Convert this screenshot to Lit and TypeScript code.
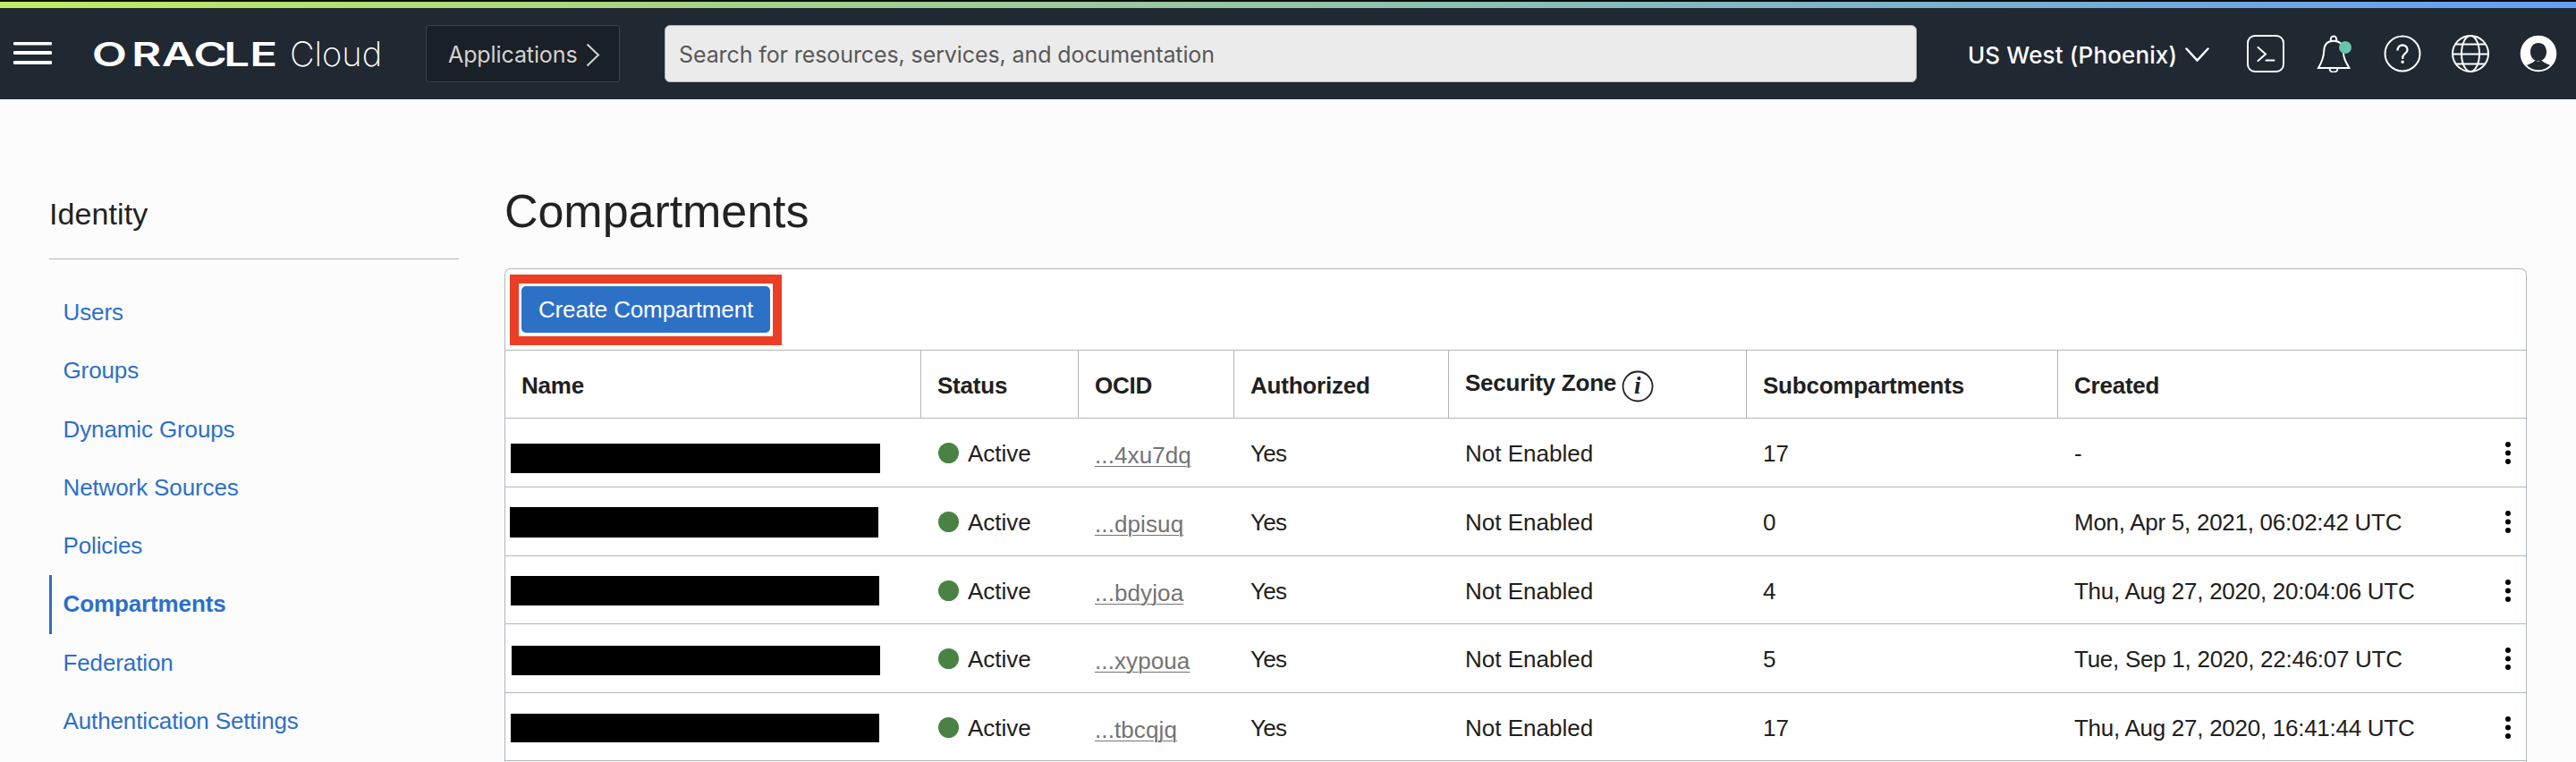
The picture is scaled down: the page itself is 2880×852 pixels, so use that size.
import { LitElement, html, css } from "lit";
import { customElement } from "lit/decorators.js";
import { classMap } from "lit/directives/class-map.js";

interface Compartment {
  ocid: string;
  subs: string;
  created: string;
  height: number;
  mask: { left: number; top: number; width: number; height: number };
}

const LINKS = [
  "Users", "Groups", "Dynamic Groups", "Network Sources",
  "Policies", "Compartments", "Federation", "Authentication Settings",
];

const ROWS: Compartment[] = [
  { ocid: "...4xu7dq", subs: "17", created: "-", height: 77, mask: { left: 6, top: 28, width: 413, height: 33 } },
  { ocid: "...dpisuq", subs: "0", created: "Mon, Apr 5, 2021, 06:02:42 UTC", height: 77, mask: { left: 5, top: 22, width: 412, height: 33.5 } },
  { ocid: "...bdyjoa", subs: "4", created: "Thu, Aug 27, 2020, 20:04:06 UTC", height: 76, mask: { left: 6, top: 22, width: 412, height: 33 } },
  { ocid: "...xypoua", subs: "5", created: "Tue, Sep 1, 2020, 22:46:07 UTC", height: 77, mask: { left: 6.5, top: 23.5, width: 412, height: 33 } },
  { ocid: "...tbcqjq", subs: "17", created: "Thu, Aug 27, 2020, 16:41:44 UTC", height: 76, mask: { left: 6, top: 22.5, width: 411.5, height: 32 } },
];

@customElement("cloud-header")
class CloudHeader extends LitElement {
  static styles = css`
    :host { display: block; font-family: Inter, sans-serif; }
    .stripe { height: 7px; border-top: 2px solid #0d0d0d; background: linear-gradient(90deg, #c1eb62, #a5d584 26%, #93c5a8 50%, #7bb2cd 74%, #639ff8); }
    .bar { height: 102px; background: #202832; display: flex; align-items: center; color: #fff; box-sizing: border-box; padding: 0 21px 0 15px; }
    svg { display: block; fill: none; stroke: #fff; stroke-width: 2; flex: none; }
    .burger { margin-right: 44px; stroke: none; fill: #fff; }
    .logo { margin-right: 44px; stroke: none; fill: #fff; overflow: visible; }
    .brand { font: 600 37px Inter, sans-serif; }
    .cloud { font: 200 38px Inter, sans-serif; }
    .apps { width: 217px; height: 64px; box-sizing: border-box; border: 1px solid #39424e; border-radius: 3px; background: #1a2027; color: #d4d2cf; font-size: 25px; letter-spacing: -0.1px; display: flex; align-items: center; padding: 2px 0 0 24px; gap: 9px; margin-right: 50px; flex: none; }
    .apps svg { stroke: #d4d2cf; }
    .search { width: 1400px; height: 64px; box-sizing: border-box; border: 1px solid #adb5be; border-radius: 6px; background: #ebebeb; color: #585858; font-size: 25px; letter-spacing: -0.1px; display: flex; align-items: center; padding: 2px 0 0 15px; flex: none; }
    .region { margin-left: 57px; font-size: 26px; font-weight: 500; padding-top: 2px; width: 233px; letter-spacing: 0.12px; white-space: nowrap; flex: none; }
    .down { margin: 2px 0 0 10px; }
    .icons { display: flex; justify-content: space-between; width: 347px; margin-left: auto; align-items: center; flex: none; }
  `;
  render() {
    return html`
      <div class="stripe"></div>
      <div class="bar">
        <svg class="burger" width="43" height="26" viewBox="0 0 43 26">
          <rect width="43" height="3.4" rx="1" /><rect y="10" width="43" height="4" rx="1" /><rect y="21" width="43" height="4" rx="1" />
        </svg>
        <svg class="logo" width="330" height="32" viewBox="0 0 330 32">
          <text class="brand" transform="scale(1.38 1)" x="0.6 32.6 57 82.8 107.5 128.5" y="30">ORACLE</text>
          <text class="cloud" x="222" y="30">Cloud</text>
        </svg>
        <div class="apps">Applications
          <svg width="16" height="27" viewBox="0 0 16 27"><path d="M1.5 1.5L14 13.500 1.5 25.5" /></svg>
        </div>
        <div class="search">Search for resources, services, and documentation</div>
        <div class="region">US West (Phoenix)</div>
        <svg class="down" width="27" height="16" viewBox="0 0 27 16"><path stroke-width="2.5" stroke-linecap="round" d="M1.5 1.5L13.5 14.5 25.5 1.5" /></svg>
        <div class="icons">
          <svg width="42" height="42" viewBox="0 0 42 42"><rect x="1" y="1" width="40" height="40" rx="8" /><path stroke-linecap="round" d="M12.5 14l8.5 7.5-8.5 7.5M21.5 28.5h9" /></svg>
          <svg width="42" height="42" viewBox="0 0 42 42"><path d="M17.800 7V4.700a3.200 3.200 0 0 1 6.400 0V7M4 37H38.400C34 29 32 26 31.800 18 31.500 10 27 6.700 21 6.700S10.500 10 10.200 18C10 26 7.500 31 4 37ZM16.500 37.500a4.500 4.200 0 0 0 9 0" /><circle cx="34" cy="14" r="7" fill="#66c5ab" stroke="none" /></svg>
          <svg width="42" height="42" viewBox="0 0 42 42"><circle cx="21" cy="21" r="19.500" /><path stroke-width="2.300" d="M15.500 17.500c0-4 2.500-6 5.500-6s5.500 2 5.500 5.200c0 4.300-5.300 4.300-5.300 8.800v1.500" /><circle cx="21.100" cy="30.300" r="1.700" fill="#fff" stroke="none" /></svg>
          <svg width="42" height="42" viewBox="0 0 42 42"><circle cx="21" cy="21" r="20" /><ellipse cx="21" cy="21" rx="10" ry="20" /><path d="M1 21.500h40M5 10.500h32M5 32.500h32" /></svg>
          <svg width="42" height="42" viewBox="0 0 42 42"><circle cx="21" cy="21" r="19.300" /><path fill="#fff" stroke="none" fill-rule="evenodd" d="M21 1a20 20 0 0 1 14.500 33.500C31 32.500 28 31.500 25 29H17C14 31.500 11 32.500 6.500 34.500A20 20 0 0 1 21 1ZM21 9C15.500 9 12 13 12 19s4 10.500 9 10.500 9-4.500 9-10.500S26.500 9 21 9Z" /></svg>
        </div>
      </div>`;
  }
}

@customElement("identity-nav")
class IdentityNav extends LitElement {
  static styles = css`
    :host { display: block; width: 458px; flex: none; }
    .title { font-size: 34px; line-height: 40px; letter-spacing: 0.1px; color: #222; padding: 108px 0 30px; height: 40px; border-bottom: 1px solid #b0b7be; }
    .links { padding-top: 27px; }
    .link { height: 65.3px; box-sizing: border-box; border-left: 3px solid transparent; padding-left: 12.5px; font-size: 26px; line-height: 64px; letter-spacing: -0.12px; color: #2b70c8; }
    .active { border-left-color: #2b70c8; font-weight: bold; }
  `;
  render() {
    return html`
      <div class="title">Identity</div>
      <div class="links">
        ${LINKS.map((l) => html`<div class=${classMap({ link: true, active: l === "Compartments" })}>${l}</div>`)}
      </div>`;
  }
}

@customElement("compartment-table")
class CompartmentTable extends LitElement {
  static styles = css`
    :host { display: block; width: 2261px; box-sizing: border-box; border: 1px solid #b1b6be; border-bottom: none; border-radius: 7px 7px 0 0; background: #fff; height: 552px; color: #202020; font-size: 26px; line-height: 30px; overflow: hidden; white-space: nowrap; }
    .toolbar { height: 91px; box-sizing: border-box; padding: 6px 0 0 5px; border-bottom: 1px solid #b1b6be; }
    .mark { width: 304px; height: 79px; box-sizing: border-box; border: 10px solid #eb3e25; padding: 3px; }
    .create { width: 278px; height: 52px; border-radius: 5px; background: #2d71c7; color: #fff; text-align: center; line-height: 52px; letter-spacing: -0.15px; }
    .row { display: grid; grid-template-columns: 465px 176px 174px 240px 333px 348px 1fr; box-sizing: border-box; border-bottom: 1px solid #b1b6be; }
    .head { height: 76px; font-weight: bold; letter-spacing: -0.22px; }
    .h { border-right: 1px solid #b1b6be; padding: 24px 0 0 18px; }
    .h:last-child { border-right: none; }
    .zone { display: flex; gap: 6px; padding-top: 21px; }
    .info { margin-top: 1px; display: block; }
    .i { font: italic bold 27px "Liberation Serif", serif; }
    .cell { padding: 24px 0 0 18px; }
    .status { display: flex; gap: 10px; padding-left: 19px; }
    .dot { width: 23px; height: 23px; border-radius: 50%; background: #4a8243; margin-top: 3px; }
    .mask { background: #000; }
    .ocid { padding-top: 26px; letter-spacing: 0.1px; color: #737373; }
    .under { text-decoration: underline; text-decoration-thickness: 1px; text-underline-offset: 3px; }
    .yes { letter-spacing: -0.7px; }
    .created { display: flex; justify-content: space-between; letter-spacing: -0.27px; padding-right: 16px; }
    .menu { margin-top: 1px; }
  `;
  render() {
    return html`
      <div class="toolbar"><div class="mark"><div class="create">Create Compartment</div></div></div>
      <div class="row head">
        <div class="h">Name</div><div class="h">Status</div><div class="h">OCID</div><div class="h">Authorized</div>
        <div class="h zone">Security Zone
          <svg class="info" width="36" height="36" viewBox="0 0 36 36"><circle cx="18" cy="18" r="16.500" fill="none" stroke="#202020" stroke-width="1.800" /><text class="i" x="14" y="26" fill="#202020">i</text></svg>
        </div>
        <div class="h">Subcompartments</div><div class="h">Created</div>
      </div>
      ${ROWS.map((r) => html`
        <div class="row" style="height:${r.height}px">
          <div class="mask" style="width:${r.mask.width}px;height:${r.mask.height}px;margin:${r.mask.top}px 0 0 ${r.mask.left}px"></div>
          <div class="cell status"><span class="dot"></span>Active</div>
          <div class="cell ocid"><span class="under">${r.ocid}</span></div>
          <div class="cell yes">Yes</div>
          <div class="cell">Not Enabled</div>
          <div class="cell">${r.subs}</div>
          <div class="cell created"><span>${r.created}</span>
            <svg class="menu" width="8" height="28" viewBox="0 0 8 28"><circle cx="4" cy="4" r="3" /><circle cx="4" cy="13.500" r="3" /><circle cx="4" cy="23" r="3" /></svg>
          </div>
        </div>`)}`;
  }
}

@customElement("app-root")
class AppRoot extends LitElement {
  static styles = css`
    :host { display: block; width: 2880px; height: 852px; overflow: hidden; background: #fcfcfc; font-family: "Liberation Sans", Arial, sans-serif; }
    .page { display: flex; gap: 51px; padding-left: 55px; }
    .title { font-size: 52px; line-height: 60px; color: #222; font-weight: normal; margin: 95px 0 34px; letter-spacing: -0.05px; }
  `;
  render() {
    return html`
      <cloud-header></cloud-header>
      <div class="page">
        <identity-nav></identity-nav>
        <div><h1 class="title">Compartments</h1><compartment-table></compartment-table></div>
      </div>`;
  }
}
